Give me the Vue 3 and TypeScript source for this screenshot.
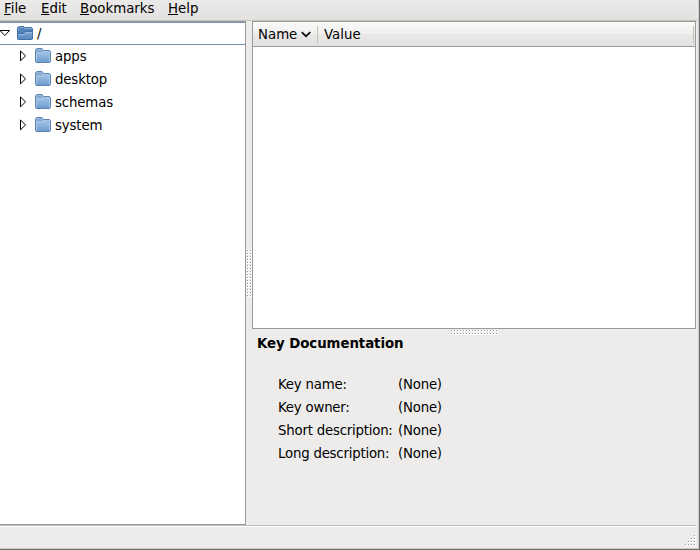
<script setup lang="ts">
interface TreeItem {
  label: string
  open?: boolean
}

const menus: string[] = ['File', 'Edit', 'Bookmarks', 'Help']
const tree: TreeItem[] = [
  { label: '/', open: true },
  { label: 'apps' },
  { label: 'desktop' },
  { label: 'schemas' },
  { label: 'system' },
]
const docs = [
  { key: 'Key name:', value: '(None)' },
  { key: 'Key owner:', value: '(None)' },
  { key: 'Short description:', value: '(None)' },
  { key: 'Long description:', value: '(None)' },
]

type Dot = { x: number; y: number }
const grid = (cols: number, rows: number): Dot[] =>
  Array.from({ length: cols * rows }, (_, i) => ({ x: (i % cols) * 3, y: Math.floor(i / cols) * 3 }))
const vDots = grid(2, 16)
const hDots = grid(16, 2)
const cornerDots = grid(4, 4).filter((d) => d.x + d.y >= 9)
</script>

<template>
  <div class="window">
    <nav class="menubar">
      <span v-for="m in menus" :key="m" class="menu" :class="m.toLowerCase()"><span class="mnemonic">{{ m[0] }}</span>{{ m.slice(1) }}</span>
    </nav>
    <main class="body">
      <section class="tree">
        <div v-for="item in tree" :key="item.label" class="row" :class="{ root: item.open }">
          <svg v-if="item.open" class="arrow" width="12" height="12" viewBox="0 0 12 12">
            <path d="M1 2.5H10.5L5.8 7.6Z" fill="#fff" stroke="#000" stroke-width="1" />
          </svg>
          <svg v-else class="arrow" width="12" height="12" viewBox="0 0 12 12">
            <path d="M3.5 1V10.8L8.6 5.9Z" fill="#fff" stroke="#000" stroke-width="1" />
          </svg>
          <svg class="folder" width="16" height="16" viewBox="0 0 16 16">
            <defs>
              <linearGradient id="closedFill" x1="0" y1="0" x2="0" y2="1">
                <stop offset="0" stop-color="#a6c5e7" />
                <stop offset="1" stop-color="#6f9dce" />
              </linearGradient>
              <linearGradient id="openFill" x1="0" y1="0" x2="0" y2="1">
                <stop offset="0" stop-color="#82abd9" />
                <stop offset="1" stop-color="#5687c0" />
              </linearGradient>
            </defs>
            <template v-if="item.open">
              <path d="M.5 13V2L1.8 .5H6.5L7.8 1.5H14.5L15.5 2.7V13L14.8 13.5H1.2Z" fill="#5582b8" stroke="#4772a8" />
              <path d="M1.5 4.5V2.5L2.5 1.5H6L7 2.5H14.5" fill="none" stroke="#8fb1d8" stroke-width=".9" />
              <path d="M1 8H7L8.5 6H15V13H1Z" fill="url(#openFill)" />
              <path d="M1 8.5H6.8L8.5 6.5H15" fill="none" stroke="#9bbde2" stroke-width=".9" />
              <path d="M1 7.5H6.3L8 5.5H15" fill="none" stroke="#416da4" stroke-width=".9" />
            </template>
            <template v-else>
              <path d="M.5 13.5V2L1.8 .5H7L8.5 2.5H14.5L15.5 3.5V13.5L14.8 14.5H1.2Z" fill="#86abd5" stroke="#5a82b3" />
              <path d="M1.4 3.2L2.3 1.8H6.6L7.5 3.2L6.2 4.4H1.5Z" fill="#7ba0ca" stroke="#b1cae4" stroke-width=".7" />
              <path d="M1 6L2 5H6.3L8.3 3.4H14.7V14H1Z" fill="url(#closedFill)" />
              <path d="M1.5 13.5V5.8L2.2 5H6.5L8.3 3.5H14.5V13.5" fill="none" stroke="#b4cee9" stroke-width=".7" />
            </template>
          </svg>
          <span class="label">{{ item.label }}</span>
        </div>
      </section>
      <div class="vsplit">
        <svg width="6" height="48" viewBox="0 0 6 48">
          <template v-for="(d, i) in vDots" :key="i">
            <rect :x="d.x + 1" :y="d.y" width="2" height="2" fill="#fff" />
            <rect :x="d.x + 1" :y="d.y" width="1" height="1" fill="#999794" />
          </template>
        </svg>
      </div>
      <section class="right">
        <div class="list">
          <header class="columns">
            <span class="name">Name</span>
            <svg class="sort" width="10" height="7" viewBox="0 0 10 7"><path d="M.7 1.2L5 5.2L9.3 1.2" fill="none" stroke="#111" stroke-width="1.8" /></svg>
            <i class="separator"></i>
            <span class="value">Value</span>
            <i class="separator last"></i>
          </header>
        </div>
        <div class="hsplit">
          <svg width="48" height="6" viewBox="0 0 48 6">
            <template v-for="(d, i) in hDots" :key="i">
              <rect :x="d.x" :y="d.y + 1" width="2" height="2" fill="#fff" />
              <rect :x="d.x" :y="d.y + 1" width="1" height="1" fill="#999794" />
            </template>
          </svg>
        </div>
        <h1 class="title">Key Documentation</h1>
        <dl class="docs">
          <template v-for="d in docs" :key="d.key">
            <dt>{{ d.key }}</dt>
            <dd>{{ d.value }}</dd>
          </template>
        </dl>
      </section>
    </main>
    <footer class="status">
      <svg width="12" height="12" viewBox="0 0 12 12">
        <template v-for="(d, i) in cornerDots" :key="i">
          <rect :x="d.x" :y="d.y" width="2" height="2" fill="#fff" />
          <rect :x="d.x" :y="d.y" width="1" height="1" fill="#8d8b88" />
        </template>
      </svg>
    </footer>
  </div>
</template>

<style>
body {
  margin: 0;
  overflow: hidden;
}
</style>

<style scoped>
.window {
  box-sizing: border-box;
  width: 700px;
  height: 550px;
  display: flex;
  flex-direction: column;
  background: #edeceb;
  border-right: 1px solid #6c6c6c;
  border-bottom: 1px solid #6c6c6c;
  box-shadow: inset -1px -1px #cfcdcb;
  font: 13.33px/23px "DejaVu Sans", sans-serif;
  color: #000;
  white-space: nowrap;
}
svg {
  display: block;
  flex: none;
}
.menubar {
  box-sizing: border-box;
  height: 21px;
  flex: none;
  display: flex;
  padding-left: 4px;
  margin-right: 2px;
  line-height: 17px;
  background: linear-gradient(#ebeae8, #e2e1df);
  border-bottom: 1px solid #c3c1bd;
}
.file {
  width: 37px;
}
.edit {
  width: 39px;
}
.bookmarks {
  width: 88px;
}
.mnemonic {
  text-decoration: underline;
  text-decoration-thickness: 1px;
  text-underline-offset: 1px;
}
.body {
  display: flex;
  height: 504px;
  flex: none;
}
.tree {
  box-sizing: border-box;
  width: 246px;
  background: #fff;
  border: solid #9c9a98;
  border-width: 1px 1px 1px 0;
}
.row {
  box-sizing: border-box;
  height: 23px;
  display: flex;
  align-items: center;
  padding: 0 0 1px 17px;
  letter-spacing: -0.15px;
}
.root {
  padding: 0;
  border: solid #7592b7;
  border-width: 1px 0;
}
.root .arrow {
  margin-left: -1px;
}
.folder {
  margin: 0 4px 0 6px;
}
.vsplit {
  width: 6px;
  display: flex;
  align-items: center;
  padding-top: 2px;
}
.right {
  width: 444px;
  display: flex;
  flex-direction: column;
}
.list {
  box-sizing: border-box;
  height: 308px;
  background: #fff;
  border: 1px solid #9c9a98;
}
.columns {
  box-sizing: border-box;
  height: 25px;
  display: flex;
  align-items: center;
  padding: 0 1px 0 5px;
  background: linear-gradient(#fbfbfa 0%, #f0efed 49%, #eae9e7 51%, #e2e1df 100%);
  border-bottom: 1px solid #9c9a98;
}
.name {
  width: 39px;
}
.sort {
  margin: 0 6px 0 4px;
}
.separator {
  width: 1px;
  height: 17px;
  background: #c5c3c0;
  margin-right: 6px;
}
.last {
  margin: 0 0 0 auto;
}
.hsplit {
  height: 6px;
  padding-left: 2px;
  display: flex;
  justify-content: center;
}
.title {
  margin: 1px 0 0;
  padding-left: 5px;
  font-size: 13.33px;
  line-height: 16px;
  letter-spacing: -0.06px;
}
.docs {
  margin: 21px 0 0 26px;
  display: grid;
  grid-template-columns: 120px auto;
  grid-auto-rows: 23px;
  letter-spacing: -0.22px;
}
dt,
dd {
  margin: 0;
}
.status {
  box-sizing: border-box;
  height: 24px;
  margin-right: 3px;
  border-top: 1px solid #c0bebb;
  box-shadow: inset 0 1px #fff;
  display: flex;
  justify-content: flex-end;
  padding-top: 9px;
}
.status svg {
  margin-right: -1px;
}
</style>
